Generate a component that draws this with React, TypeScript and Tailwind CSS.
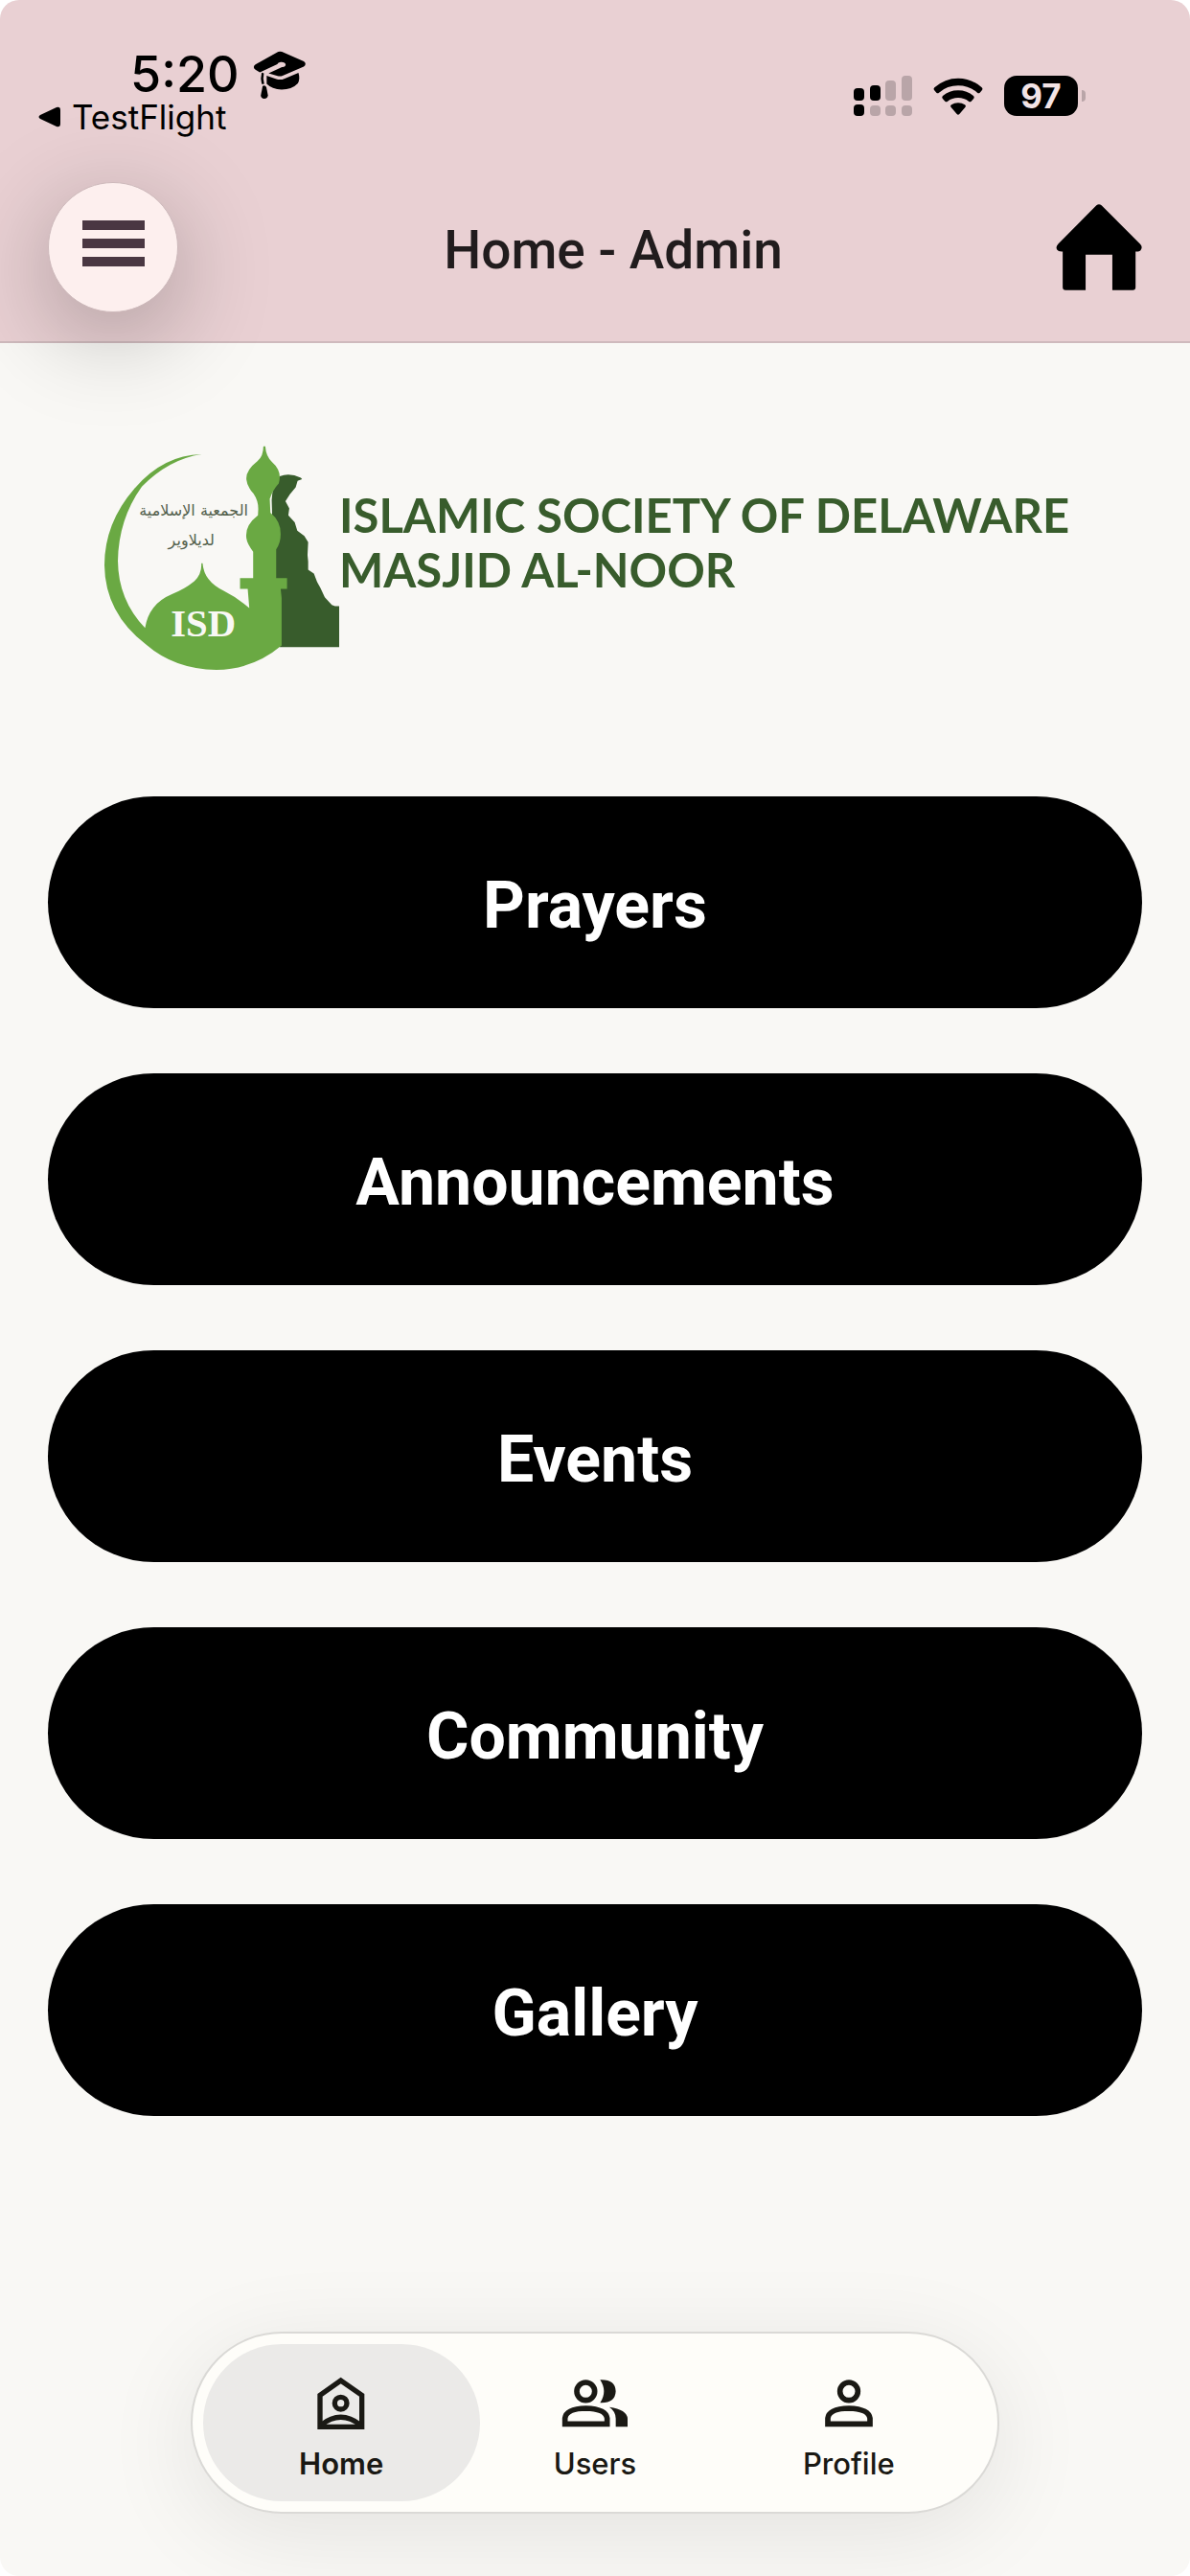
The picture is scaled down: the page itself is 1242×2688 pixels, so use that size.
const links = ["Prayers", "Announcements", "Events", "Community", "Gallery"];

function GraduationCap() {
  return (
    <svg className="h-[52px] w-14" viewBox="785 165 172 160" aria-hidden="true">
      <path d="M866 171q6-2 12 0l70 31q11 8 0 17l-66 28q-9 4-18 2l-29-9 43-20q11 1 12-8-2-9-16-8-9 1-11 7l-56 26-14-8q-11-9 0-17z" />
      <path d="M829 248l31 11q14 4 27-2l44-18q6 19-2 34-19 20-52 20-31-2-48-19z" />
      <path d="M813 238l7 2q-4 16 1 34-6 2-8 0-5-18 0-36z" />
      <path d="M816 281q8-4 12 4l5 26q-1 10-12 11-10-1-11-10z" />
    </svg>
  );
}

function Signal() {
  return (
    <svg className="h-[42px] w-[61px]" viewBox="0 0 61 42" aria-hidden="true">
      <rect x="0" y="13" width="11" height="13" rx="4" />
      <rect x="17" y="10" width="11" height="16" rx="4" />
      <rect x="0" y="30" width="11" height="12" rx="4" />
      <g fill="#b9a5a8">
        <rect x="33" y="5" width="11" height="21" rx="4" />
        <rect x="50" y="0" width="11" height="26" rx="4" />
        <rect x="17" y="31" width="11" height="11" rx="4" />
        <rect x="33" y="31" width="11" height="11" rx="4" />
        <rect x="50" y="31" width="11" height="11" rx="4" />
      </g>
    </svg>
  );
}

function Wifi() {
  return (
    <svg className="h-[39px] w-[52px]" viewBox="400 121 156 117" aria-hidden="true">
      <path d="M404 152Q436 123 478 123t74 29q4 4 1 8l-7 8q-4 3-8 0-26-22-60-22t-60 22q-4 3-8 0l-7-8q-3-4 1-8z" />
      <path d="M430 178q20-17 48-17t48 17q4 4 1 8l-8 9q-4 4-8 0-14-11-33-11t-33 11q-4 4-8 0l-8-9q-3-4 1-8z" />
      <path d="M457 206q9-6 21-6t21 6q5 4 1 8l-18 21q-4 4-8 0l-18-21q-4-4 1-8z" />
    </svg>
  );
}

function HouseSolid() {
  return (
    <svg className="h-[90px] w-[90px]" viewBox="783 519 270 271" aria-hidden="true">
      <path d="M910 523q8-6 16 0l121 121q9 9 3 18-3 7-17 6v112q0 9-9 9h-64V678h-84v111h-63q-9 0-9-9V668q-14 1-18-6-5-9 4-18z" />
    </svg>
  );
}

function Emblem() {
  return (
    <svg className="h-[237px] w-[247px] shrink-0" viewBox="80 70 740 710" role="img" aria-label="Masjid emblem">
      <path
        fill="#385c2c"
        d="M634 172q30-12 66 4l4 5-14 5-6 20-18 22-14 22 12 22-3 22 20 22 8 26 22 16 12 20-2 40 2 20 0 26 18 12 10 26 10 18 14 30 22 24 10 4h18l8 128H634l-15-130-10-330q2-50 25-74z"
      />
      <path
        fill="#6aa943"
        d="M390 103Q270 105 180 210 86 318 86 450q2 150 130 248 90 78 220 79 115-1 204-76V552l-3-28h20v-34h-34V400q14-20 14-48 0-40-32-66l-2-44q8-26 28-48 12-38-22-68-18-18-20-48h-6q0 30-18 46-38 30-35 58 2 22 22 44 15 22 15 48l-1 20q-42 32-36 72 2 16 21 42v82h-41v34h24l5 60q-36-32-80-54-62-30-66-86h-4q2 34-22 56-32 26-70 40-72 30-84 106-84-88-85-210 2-130 75-232Q288 118 390 103z"
      />
      <text x="395" y="672" fill="#f9f8f5" textAnchor="middle" className="font-['Liberation_Serif',serif] text-[122px] font-bold">
        ISD
      </text>
      <g fill="#53604c" textAnchor="middle" className="font-['DejaVu_Sans',sans-serif] text-[48px]">
        <text x="365" y="294" direction="rtl">الجمعية الإسلامية</text>
        <text x="358" y="388" direction="rtl">لديلاوير</text>
      </g>
    </svg>
  );
}

function HomeIcon() {
  return (
    <svg className="h-14 w-[70px]" viewBox="422 236 210 168" fill="none" stroke="#1a1914" strokeWidth="16" aria-hidden="true">
      <path d="M461 396V297l65-46 66 46v99z" />
      <circle cx="526" cy="322" r="19" />
      <path d="M465 390q61-48 122 0" />
    </svg>
  );
}

function UsersIcon() {
  return (
    <svg className="h-14 w-[70px]" viewBox="1219 236 210 168" fill="none" stroke="#1a1914" strokeWidth="17" aria-hidden="true">
      <circle cx="1295" cy="285" r="28" />
      <path d="M1230 387v-18q4-30 66-31 62 2 66 31v18z" />
      <path fill="#1a1914" stroke="none" d="M1340 249q48-2 49 36-2 38-49 36 24-36 0-72z" />
      <path fill="#1a1914" stroke="none" d="M1369 334q55 8 57 36v26h-37v-26q0-22-20-36z" />
    </svg>
  );
}

function ProfileIcon() {
  return (
    <svg className="h-14 w-[70px]" viewBox="1191 236 210 168" fill="none" stroke="#1a1914" strokeWidth="17" aria-hidden="true">
      <circle cx="1296" cy="285" r="28" />
      <path d="M1230 387v-18q4-30 66-31 62 2 66 31v18z" />
    </svg>
  );
}

const tabs = [
  { label: "Home", Icon: HomeIcon, active: true },
  { label: "Users", Icon: UsersIcon, active: false },
  { label: "Profile", Icon: ProfileIcon, active: false },
];

export default function App() {
  return (
    <div className="bg-white">
      <div className="flex min-h-screen flex-col overflow-hidden rounded-[20px] bg-[#f9f8f5] font-[Inter,sans-serif] text-black">
        <header className="relative z-10 border-b-2 border-[#cfbabd] bg-[#e9d0d3] pt-12 pb-[30px]">
          <div className="flex items-center justify-between pr-[109px] pl-10">
            <div>
              <div className="flex items-center gap-3.5 pl-24">
                <span className="text-[52px] leading-[60px] font-medium">5:20</span>
                <GraduationCap />
              </div>
              <a href="#testflight" className="flex items-center gap-3 text-[35px] leading-[28px]">
                <svg className="h-[22px] w-[23px]" viewBox="0 0 23 22" aria-hidden="true">
                  <path d="M2 9 19 1q4-1 4 3v14q0 4-4 3L2 13q-3-2 0-4z" />
                </svg>
                TestFlight
              </a>
            </div>
            <div className="flex items-center gap-[22px] pt-4">
              <Signal />
              <Wifi />
              <div className="flex items-center gap-1">
                <span className="flex h-[42px] w-[77px] items-center justify-center rounded-[13px] bg-black text-[35px] leading-none font-bold text-[#f3e4e6]">
                  97
                </span>
                <span className="h-3 w-1 rounded-r-full bg-[#b9a5a8]" />
              </div>
            </div>
          </div>
          <div className="mt-[54px] flex items-center justify-between px-[50px]">
            <button
              type="button"
              aria-label="Menu"
              className="flex h-[136px] w-[136px] items-center justify-center rounded-full border border-[#cdb9bb] bg-[#fdefee] pb-2 shadow-[0_24px_100px_rgba(0,0,0,0.28)]"
            >
              <span className="flex w-[65px] flex-col gap-[9px]">
                <span className="h-[10px] bg-[#4a3742]" />
                <span className="h-[10px] bg-[#4a3742]" />
                <span className="h-[10px] bg-[#4a3742]" />
              </span>
            </button>
            <h1 className="pt-1.5 font-[Roboto,sans-serif] text-[55px] leading-[64px] font-medium text-[#211c1d]">Home - Admin</h1>
            <button type="button" aria-label="Go home" className="flex w-[98px] justify-end">
              <HouseSolid />
            </button>
          </div>
        </header>

        <main className="px-[50px] pt-[105px]">
          <div className="flex items-start pl-[57px]">
            <Emblem />
            <p className="pt-[46px] font-[Lato,sans-serif] text-[49px] leading-[57px] font-bold whitespace-nowrap text-[#385c2c]">
              ISLAMIC SOCIETY OF DELAWARE
              <br />
              MASJID AL-NOOR
            </p>
          </div>
          <div className="mt-[131px] flex flex-col gap-[68px]">
            {links.map((label) => (
              <button
                key={label}
                type="button"
                className="h-[221px] w-full rounded-full bg-black pt-1.5 font-[Roboto,sans-serif] text-[68px] font-bold text-white"
              >
                {label}
              </button>
            ))}
          </div>
        </main>

        <nav
          aria-label="Main"
          className="mx-auto mt-auto mb-[65px] flex w-[68%] rounded-full border-2 border-[#dad9d6] bg-[#fefdf9] p-[11px] shadow-[0_20px_100px_rgba(0,0,0,0.09)]"
        >
          {tabs.map(({ label, Icon, active }) => (
            <a
              key={label}
              href={"#" + label.toLowerCase()}
              aria-current={active ? "page" : undefined}
              className={
                "flex h-[164px] flex-1 flex-col items-center gap-[18px] pt-[33px] text-[31px] leading-[36px] text-[#1a1914] not-first:-ml-6 " +
                (active ? "rounded-full bg-[#ebeae8] font-semibold" : "font-medium")
              }
            >
              <Icon />
              {label}
            </a>
          ))}
        </nav>
      </div>
    </div>
  );
}
